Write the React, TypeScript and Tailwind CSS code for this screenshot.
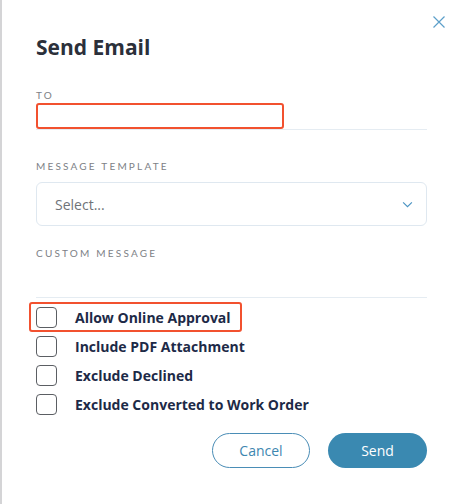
import React from 'react';

const options = [
  'Allow Online Approval',
  'Include PDF Attachment',
  'Exclude Declined',
  'Exclude Converted to Work Order',
];

const Label = ({ children, className = '' }: { children: React.ReactNode; className?: string }) => (
  <div className={`text-[10px] leading-[14px] tracking-[2.2px] text-[#7d8186] uppercase font-['Lato',sans-serif] ${className}`}>{children}</div>
);

const App = () => {
  return (
    <div className="relative w-[462px] h-[504px] bg-white border-l-2 border-[#d4d4d6] font-['Open_Sans',sans-serif] pl-[34px] pr-[35px]">
      {/* Close */}
      <button className="absolute top-[15px] right-[16px] w-[14px] h-[14px] text-[#5c9fc9]">
        <svg viewBox="0 0 14 14" className="w-full h-full" fill="none" stroke="currentColor" strokeWidth="1.2">
          <path d="M1.5 1.5l11 11M12.5 1.5l-11 11" />
        </svg>
      </button>

      <h1 className="pt-[33px] text-[21px] leading-[28px] font-bold text-[#2b303a]">Send Email</h1>

      <Label className="mt-[27px]">To</Label>
      <div className="mt-[1px] border-b border-[#e5ecf2]">
        <div className="w-[248px] h-[26px] border-2 border-[#f2512f] rounded-[3px]" />
      </div>

      <Label className="mt-[29px]">Message Template</Label>
      <div className="mt-[9px] h-[44px] border border-[#dfe8f0] rounded-[6px] flex items-center justify-between pl-[18px] pr-[13px]">
        <span className="text-[14px] text-[#6f7378]">Select...</span>
        <svg viewBox="0 0 12 8" className="w-[11px] h-[7px] text-[#4a93c2]" fill="none" stroke="currentColor" strokeWidth="1.3">
          <path d="M1 1.5l5 5 5-5" />
        </svg>
      </div>

      <Label className="mt-[20px]">Custom Message</Label>
      <div className="h-[38px] border-b border-[#e5ecf2]" />

      <div className="mt-[9px] flex flex-col gap-[8px]">
        {options.map((o, i) => (
          <div key={o} className="relative flex items-center h-[21px]">
            {i === 0 && (
              <div className="absolute -left-[7px] -top-[5px] w-[213px] h-[30px] border-2 border-[#f2512f] rounded-[3px]" />
            )}
            <div className="w-[21px] h-[21px] border border-[#5b5e63] rounded-[4px]" />
            <span className="ml-[18px] text-[14px] font-bold text-[#1d2a47]">{o}</span>
          </div>
        ))}
      </div>

      <div className="mt-[18px] flex justify-end gap-[18px]">
        <button className="w-[98px] h-[35px] rounded-full border border-[#4a8db6] text-[#3d86b0] text-[14px]">Cancel</button>
        <button className="w-[99px] h-[35px] rounded-full bg-[#3a89b1] text-white text-[14px]">Send</button>
      </div>
    </div>
  );
};

export default App;
